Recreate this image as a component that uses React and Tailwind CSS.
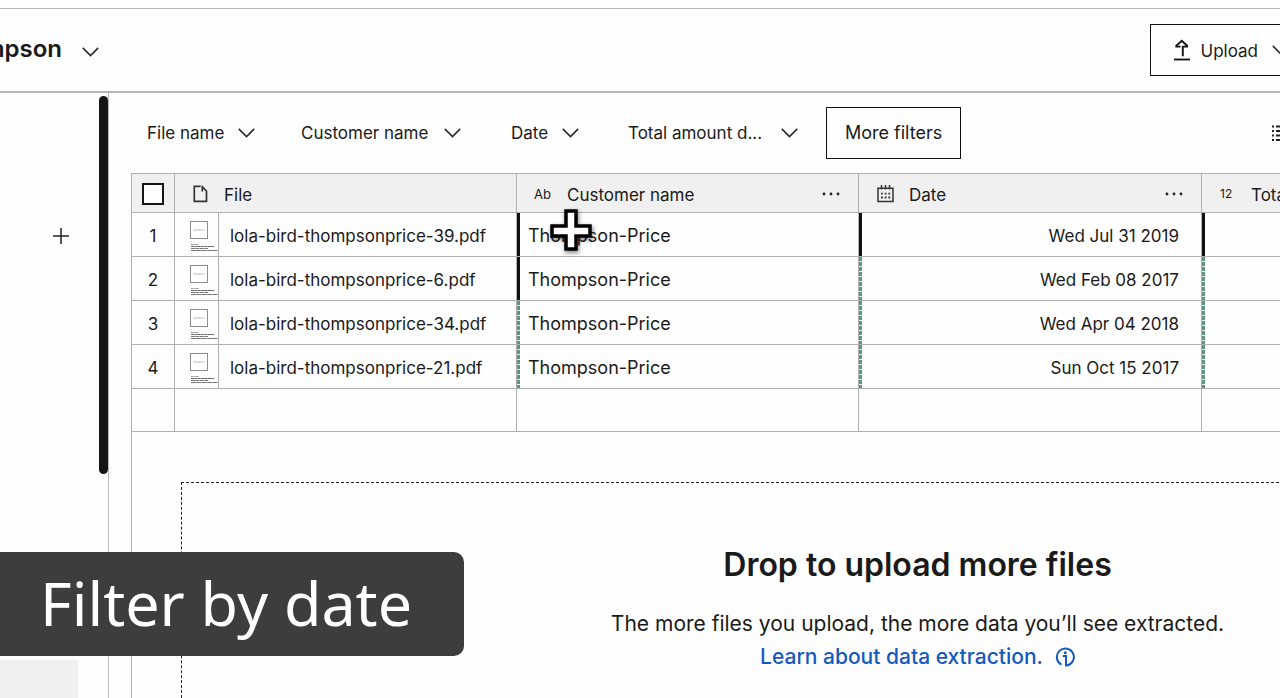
import React from "react";

const rows = [
  { file: "lola-bird-thompsonprice-39.pdf", customer: "Thompson-Price", date: "Wed Jul 31 2019", confirmed: [true, true, true] },
  { file: "lola-bird-thompsonprice-6.pdf", customer: "Thompson-Price", date: "Wed Feb 08 2017", confirmed: [true, false, false] },
  { file: "lola-bird-thompsonprice-34.pdf", customer: "Thompson-Price", date: "Wed Apr 04 2018", confirmed: [false, false, false] },
  { file: "lola-bird-thompsonprice-21.pdf", customer: "Thompson-Price", date: "Sun Oct 15 2017", confirmed: [false, false, false] },
];

const filters = [
  { label: "File name", width: "w-[154px]", gap: "gap-[14px]" },
  { label: "Customer name", width: "w-[210px]", gap: "gap-4" },
  { label: "Date", width: "w-[117px]", gap: "gap-[14px]" },
  { label: "Total amount d...", width: "w-[198px]", gap: "gap-[19px]" },
];

function Chevron() {
  return (
    <svg className="h-[10px] w-[17px] shrink-0" viewBox="0 0 17 10" fill="none" stroke="#2b2b2b" strokeWidth="1.6" aria-hidden="true">
      <path d="M.8 .9 8.5 8.6 16.2 .9" />
    </svg>
  );
}

function UploadIcon() {
  return (
    <svg className="h-[22px] w-[18px] shrink-0" viewBox="0 0 18 22" fill="none" stroke="#151515" strokeWidth="1.9" aria-hidden="true">
      <path d="M9.800 17.200V7.600h4.300V6.700L8.800 1.700 3.300 6.700v.9H7.500" />
      <path d="M1 20.500h16" />
    </svg>
  );
}

function FileIcon() {
  return (
    <svg className="h-[18px] w-[15px] shrink-0" viewBox="0 0 15 18" fill="none" stroke="#333" strokeWidth="1.7" aria-hidden="true">
      <path d="M7.500 1.300H1.300v15h12.200V6L9.300 1.800v4.700" />
    </svg>
  );
}

function CalendarIcon() {
  return (
    <svg className="h-[18px] w-[17px] shrink-0" viewBox="0 0 17 18" fill="none" stroke="#333" strokeWidth="1.5" aria-hidden="true">
      <path d="M1 3.200h15v13.300H1zM4.500 0v4.500M8.500 0v4.500M12.500 0v4.500" />
      <path d="M4 8.600h9.500M4 12.500h9.500" strokeWidth="1.800" strokeDasharray="1.800 1.900" />
    </svg>
  );
}

function ListIcon() {
  return (
    <svg className="h-[17px] w-[18px] shrink-0" viewBox="0 0 18 17" stroke="#222" strokeWidth="1.9" aria-hidden="true">
      <path d="M0 1.500h2M0 6h2M0 10.500h2M0 15h2M4 1.500h14M4 6h14M4 10.500h14M4 15h14" />
    </svg>
  );
}

function InfoIcon() {
  return (
    <svg className="h-[20px] w-[20px] shrink-0" viewBox="0 0 20 20" fill="none" stroke="#1459c0" strokeWidth="2" aria-hidden="true">
      <path d="M6.500 17.600A8.500 8.500 0 1 1 11 18.500V9H7.800" />
      <circle cx="10.300" cy="5.700" r="1.500" fill="#1459c0" stroke="none" />
    </svg>
  );
}

function Thumbnail() {
  return (
    <svg className="h-[35px] w-[28px] shrink-0" viewBox="0 0 28 35" aria-hidden="true">
      <rect x=".5" y="4.500" width="17" height="17" fill="#fff" stroke="#8d8d93" />
      <path d="M3.500 13h11" stroke="#aaa" strokeWidth="1" strokeDasharray="2 .6" />
      <path d="M1 27.500h8" stroke="#999" strokeWidth="1" strokeDasharray="2 .5" />
      <path d="M1 29.500h23" stroke="#666" strokeWidth="1.200" strokeDasharray="3 .4" />
      <path d="M1 31.500h17" stroke="#777" strokeWidth="1.200" strokeDasharray="4 .5" />
      <path d="M1 33.500h27" stroke="#777" strokeWidth="1.200" strokeDasharray="5 .4" />
    </svg>
  );
}

function Dots() {
  return (
    <svg className="h-[4px] w-[18px]" viewBox="0 0 18 4" fill="#222" aria-hidden="true">
      <circle cx="2" cy="2" r="1.400" />
      <circle cx="9" cy="2" r="1.400" />
      <circle cx="16" cy="2" r="1.400" />
    </svg>
  );
}

function StatusBar({ confirmed }) {
  return confirmed ? (
    <span className="w-[3px] shrink-0 self-stretch bg-[#111]" />
  ) : (
    <span className="w-[3px] shrink-0 self-stretch bg-[repeating-linear-gradient(to_bottom,#5f9580_0px,#5f9580_4px,#e6efec_4px,#e6efec_5px)]" />
  );
}

const line = "border-[#b0b0b0]";

export default function App() {
  return (
    <div className="relative flex h-screen flex-col overflow-hidden bg-[#fefefe] font-['Inter','Liberation_Sans',sans-serif] text-[17px] leading-6 text-[#1a1a1a]">
      <header className="mt-2 flex h-[85px] shrink-0 items-center justify-between overflow-hidden border-t border-b-2 border-t-[#b5b5b5] border-b-[#b5b5b5]">
        <button type="button" className="flex items-center gap-5" aria-label="Thompson project">
          <span className="flex w-[62px] justify-end overflow-hidden pb-[2px] text-[24px] leading-8 font-semibold">Thompson</span>
          <span className="pt-1"><Chevron /></span>
        </button>
        <button type="button" className="-mr-3 flex h-[52px] shrink-0 items-center gap-[10px] border border-[#111] pr-[2px] pl-[22px]">
          <UploadIcon />
          <span className="pt-[2px] pr-1">Upload</span>
          <Chevron />
        </button>
      </header>

      <div className="flex min-h-0 flex-1">
        <aside className="flex w-[109px] shrink-0 border-r border-[#bdbdbd]">
          <div className="flex flex-1 flex-col justify-between">
            <button type="button" aria-label="Add" className="mt-[135px] ml-[53px] w-4">
              <svg className="h-4 w-4" viewBox="0 0 16 16" stroke="#222" strokeWidth="1.500" aria-hidden="true">
                <path d="M8 0v16M0 8h16" />
              </svg>
            </button>
            <div className="h-[38px] w-[78px] bg-[#f0f0f0]" />
          </div>
          <div className="mt-[3px] h-[378px] w-[9px] shrink-0 rounded-full bg-[#161616]" />
        </aside>

        <main className="flex min-w-0 flex-1 flex-col overflow-hidden pl-[22px]">
          <div className="flex h-20 shrink-0 items-center justify-between pl-4">
            <div className="flex items-center whitespace-nowrap">
              {filters.map((f) => (
                <button key={f.label} type="button" className={`flex shrink-0 items-center ${f.gap} ${f.width}`}>
                  {f.label}
                  <Chevron />
                </button>
              ))}
              <button type="button" className="h-[52px] border border-[#111] px-[18px] text-[18px]">
                More filters
              </button>
            </div>
            <button type="button" aria-label="List view" className="-mr-[10px] shrink-0"><ListIcon /></button>
          </div>

          <div className={`flex min-h-0 w-[1572px] flex-1 flex-col border-t border-l ${line}`}>
            <table className="w-full table-fixed border-separate border-spacing-0 text-left">
              <colgroup>
                <col className="w-[43px]" />
                <col className="w-[44px]" />
                <col className="w-[298px]" />
                <col className="w-[342px]" />
                <col className="w-[343px]" />
                <col />
              </colgroup>
              <thead className="bg-[#f0f0f0]">
                <tr className="h-[39px]">
                  <th className={`border-r border-b ${line} p-0 pt-[2px]`}>
                    <input type="checkbox" aria-label="Select all files" className="mx-auto block h-[22px] w-[22px] appearance-none border-2 border-[#151515] bg-white" />
                  </th>
                  <th colSpan={2} className={`border-r border-b ${line} p-0 pt-1 font-normal`}>
                    <div className="flex items-center gap-4 pl-[18px]"><span className="pb-[3px]"><FileIcon /></span>File</div>
                  </th>
                  <th className={`border-r border-b ${line} p-0 pt-1 font-normal`}>
                    <div className="flex items-center pl-[17px]">
                      <span className="w-[33px] pb-[3px] text-[13px]">Ab</span>
                      <span className="flex-1">Customer name</span>
                      <button type="button" aria-label="Customer name options" className="pr-[18px] pb-[3px]"><Dots /></button>
                    </div>
                  </th>
                  <th className={`border-r border-b ${line} p-0 pt-1 font-normal`}>
                    <div className="flex items-center pl-[18px]">
                      <span className="w-8 pb-[3px]"><CalendarIcon /></span>
                      <span className="flex-1">Date</span>
                      <button type="button" aria-label="Date options" className="pr-[18px] pb-[3px]"><Dots /></button>
                    </div>
                  </th>
                  <th className={`border-b ${line} p-0 pt-1 font-normal`}>
                    <div className="flex items-center pl-[18px]">
                      <span className="w-[31px] pb-[3px] text-[12px]">12</span>
                      <span>Total amount due</span>
                    </div>
                  </th>
                </tr>
              </thead>
              <tbody>
                {rows.map((r, i) => (
                  <tr key={r.file}>
                    <td className={`border-r border-b ${line} p-0 pt-[2px] text-center`}>{i + 1}</td>
                    <td className={`border-r border-b ${line} p-0 pl-[15px]`}><Thumbnail /></td>
                    <td className={`border-r border-b ${line} p-0 pt-[2px] pl-[11px] whitespace-nowrap`}>{r.file}</td>
                    <td className={`border-r border-b ${line} p-0`}>
                      <div className="flex h-[43px] items-center gap-2 text-[18px]">
                        <StatusBar confirmed={r.confirmed[0]} />
                        <span className="pt-[2px]">{r.customer}</span>
                      </div>
                    </td>
                    <td className={`border-r border-b ${line} p-0`}>
                      <div className="flex h-[43px] items-center justify-between pr-[22px]">
                        <StatusBar confirmed={r.confirmed[1]} />
                        <span className="pt-[2px]">{r.date}</span>
                      </div>
                    </td>
                    <td className={`border-b ${line} p-0`}>
                      <div className="flex h-[43px]"><StatusBar confirmed={r.confirmed[2]} /></div>
                    </td>
                  </tr>
                ))}
                <tr className="h-[43px]">
                  <td className={`border-r border-b ${line}`} />
                  <td colSpan={2} className={`border-r border-b ${line}`} />
                  <td className={`border-r border-b ${line}`} />
                  <td className={`border-r border-b ${line}`} />
                  <td className={`border-b ${line}`} />
                </tr>
              </tbody>
            </table>

            <section className="mx-[49px] mt-[50px] flex flex-1 shrink-0 flex-col items-center border border-b-0 border-dashed border-[#222] pt-[62px]">
              <h2 className="text-[32px] leading-10 font-semibold">Drop to upload more files</h2>
              <p className="mt-[22px] text-[21px] leading-[33px]">The more files you upload, the more data you’ll see extracted.</p>
              <a href="#data-extraction" className="flex items-center gap-3 text-[21px] leading-[33px] font-medium text-[#1459c0]">
                Learn about data extraction.
                <InfoIcon />
              </a>
            </section>
          </div>
        </main>
      </div>

      <div className="absolute bottom-[42px] left-0 flex h-[104px] items-center rounded-r-[10px] bg-[#3d3d3d] pr-[52px] pb-1 pl-10 font-['Noto_Sans','Open_Sans',sans-serif] text-[61px] leading-none text-white">
        Filter by date
      </div>

      <svg className="pointer-events-none absolute top-[209px] left-[549px] h-[46px] w-[44px] drop-shadow-[1px_2px_2px_rgba(0,0,0,0.5)]" viewBox="0 0 44 46" aria-hidden="true">
        <path d="M17 2h10v15h14v10H27v13H17V27H3V17h14z" fill="#fff" stroke="#000" strokeWidth="3.500" />
      </svg>
    </div>
  );
}
